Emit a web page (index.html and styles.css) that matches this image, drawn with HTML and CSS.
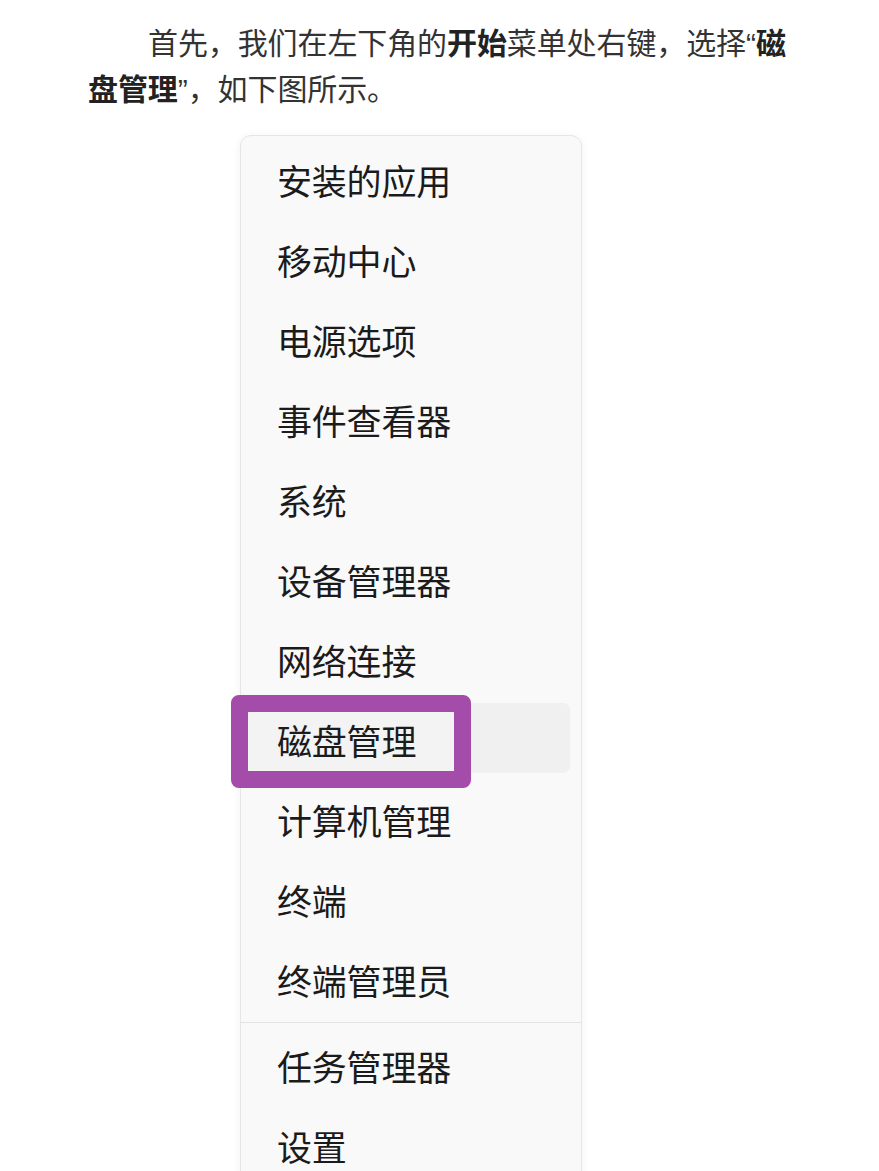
FILE: index.html
```html
<!DOCTYPE html>
<html lang="zh-CN">
<head>
<meta charset="utf-8">
<link rel="stylesheet" href="styles.css">
</head>
<body>
<div class="page">
  <p class="intro">首先，我们在左下角的<b>开始</b>菜单处右键，选择<span class="q">“</span><b>磁盘管理</b><span class="q">”</span>，如下图所示。</p>
  <div class="menu">
    <div class="group">
      <div class="item"><span class="label">安装的应用</span></div>
      <div class="item"><span class="label">移动中心</span></div>
      <div class="item"><span class="label">电源选项</span></div>
      <div class="item"><span class="label">事件查看器</span></div>
      <div class="item"><span class="label">系统</span></div>
      <div class="item"><span class="label">设备管理器</span></div>
      <div class="item"><span class="label">网络连接</span></div>
      <div class="item active"><span class="label">磁盘管理</span><span class="mark"></span></div>
      <div class="item"><span class="label">计算机管理</span></div>
      <div class="item"><span class="label">终端</span></div>
      <div class="item"><span class="label">终端管理员</span></div>
    </div>
    <div class="sep"></div>
    <div class="group second">
      <div class="item"><span class="label">任务管理器</span></div>
      <div class="item"><span class="label">设置</span></div>
    </div>
  </div>
</div>
</body>
</html>
```

FILE: styles.css
```css
html, body {
  margin: 0;
  padding: 0;
  background: #ffffff;
}
body {
  font-family: "Noto Sans CJK SC", "Noto Sans", sans-serif;
  overflow: hidden;
  height: 1171px;
}
.page {
  padding: 18px 0 0 88px;
}
.intro {
  margin: 0;
  width: 708px;
  font-size: 30px;
  line-height: 46px;
  text-indent: 60px;
  color: #333333;
  letter-spacing: -0.1px;
}
.intro b {
  font-weight: 700;
  color: #222222;
}
.intro .q {
  font-family: "Liberation Sans", sans-serif;
  letter-spacing: 0;
  line-height: 0;
}
.menu {
  margin: 25px 0 0 152px;
  width: 342px;
  height: 1100px;
  background: #f9f9f9;
  border: 1px solid #e6e6e6;
  border-radius: 11px;
  box-shadow: 0 2px 10px rgba(0, 0, 0, 0.06);
  padding-top: 3px;
  box-sizing: border-box;
}
.group {
  display: flex;
  flex-direction: column;
}
.second {
  padding-top: 2px;
}
.item {
  position: relative;
  height: 80px;
  display: flex;
  align-items: center;
  padding-left: 36px;
}
.label {
  position: relative;
  z-index: 2;
  font-size: 35px;
  color: #1b1b1b;
  letter-spacing: -0.2px;
}
.active::before {
  content: "";
  position: absolute;
  left: 7px;
  right: 11px;
  top: 4px;
  bottom: 6px;
  background: #f0f0f0;
  border-radius: 7px;
}
.mark {
  position: absolute;
  z-index: 1;
  left: -10px;
  top: -4px;
  width: 240px;
  height: 93px;
  box-sizing: border-box;
  border: 17px solid #a44ca9;
  border-radius: 8px;
  background: #f3f3f3;
}
.sep {
  height: 1px;
  margin-top: 3px;
  background: #e3e3e3;
}
```
